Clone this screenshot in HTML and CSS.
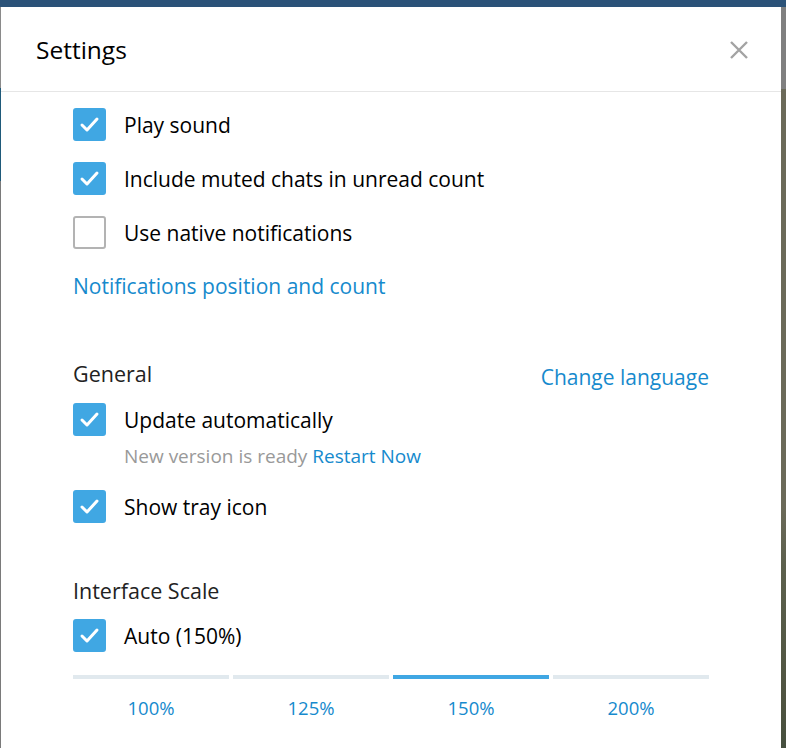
FILE: index.html
```html
<!DOCTYPE html>
<html lang="en">
<head>
	<meta charset="UTF-8">
	<title>Settings</title>
	<link rel="stylesheet" href="styles.css">
</head>
<body>
	<div class="topbar"></div>
	<div class="screen">
		<div class="edge-left"></div>
		<div class="dialog">
			<div class="dialog-head">
				<span class="dialog-title">Settings</span>
				<svg class="close" width="20" height="20" viewBox="0 0 20 20">
					<path d="M2 2 L18 18 M18 2 L2 18" />
				</svg>
			</div>
			<div class="dialog-body">
				<!-- notifications -->
				<label class="check-row">
					<span class="box on"><svg viewBox="0 0 33 33"><path d="M9 17 L14 22 L24 11" /></svg></span>
					<span class="label">Play sound</span>
				</label>
				<label class="check-row">
					<span class="box on"><svg viewBox="0 0 33 33"><path d="M9 17 L14 22 L24 11" /></svg></span>
					<span class="label">Include muted chats in unread count</span>
				</label>
				<label class="check-row">
					<span class="box"></span>
					<span class="label">Use native notifications</span>
				</label>
				<a class="link notif-link">Notifications position and count</a>

				<!-- general -->
				<div class="section-head">
					<span class="section-title">General</span>
					<a class="link lang-link">Change language</a>
				</div>
				<label class="check-row first">
					<span class="box on"><svg viewBox="0 0 33 33"><path d="M9 17 L14 22 L24 11" /></svg></span>
					<span class="label">Update automatically</span>
				</label>
				<div class="update-note">New version is ready <a class="link">Restart Now</a></div>
				<label class="check-row tray">
					<span class="box on"><svg viewBox="0 0 33 33"><path d="M9 17 L14 22 L24 11" /></svg></span>
					<span class="label">Show tray icon</span>
				</label>

				<!-- scale -->
				<div class="section-head scale-head">
					<span class="section-title">Interface Scale</span>
				</div>
				<label class="check-row auto">
					<span class="box on"><svg viewBox="0 0 33 33"><path d="M9 17 L14 22 L24 11" /></svg></span>
					<span class="label">Auto (150%)</span>
				</label>
				<div class="scale">
					<div class="scale-item"><div class="scale-bar"></div><span>100%</span></div>
					<div class="scale-item"><div class="scale-bar"></div><span>125%</span></div>
					<div class="scale-item active"><div class="scale-bar"></div><span>150%</span></div>
					<div class="scale-item"><div class="scale-bar"></div><span>200%</span></div>
				</div>
			</div>
		</div>
		<div class="edge-right"></div>
	</div>
</body>
</html>
```

FILE: styles.css
```css
html, body {
	margin: 0;
	padding: 0;
	height: 748px;
	overflow: hidden;
	font-family: "Open Sans", "DejaVu Sans", sans-serif;
	background: #fff;
}

.topbar { /* dark window strip above the dialog */
	height: 7px;
	background: #2b5278;
}

.screen {
	display: flex;
	height: 741px;
}

.edge-left {
	width: 1px;
	background: linear-gradient(to bottom, #8a8a8a 0, #8a8a8a 81px, #1f5a7a 81px, #1f5a7a 174px, #7a7a7a 174px);
}

.edge-right {
	width: 5px;
	background: linear-gradient(to bottom, #808080 0, #808080 82px, #6b6a59 82px, #6b6a59 500px, #5c604d 560px, #4e5340 700px, #46503f 741px);
}

.dialog {
	flex: 1;
	background: #fff;
}

.dialog-head {
	height: 85px;
	border-bottom: 1px solid #e6e6e6;
	display: flex;
	align-items: center;
	justify-content: space-between;
	padding: 0 32px 0 35px;
	box-sizing: border-box;
}

.dialog-title {
	font-size: 24.5px;
	color: #000;
	margin-top: 1px;
}

.close {
	width: 20px;
	height: 20px;
	margin-top: 1px;
}

.close path {
	stroke: #a3a3a3;
	stroke-width: 2.4;
	fill: none;
}

.dialog-body {
	padding: 16px 0 0 72px;
	width: 636px;
}

.check-row {
	display: flex;
	align-items: center;
	height: 33px;
	margin-bottom: 21px;
}

.box { /* checkbox square */
	width: 33px;
	height: 33px;
	box-sizing: border-box;
	border: 2px solid #b3b3b3;
	border-radius: 3px;
	flex: none;
}

.box.on {
	background: #40a7e3;
	border-color: #40a7e3;
}

.box svg {
	display: block;
	width: 33px;
	height: 33px;
	margin: -2px;
}

.box svg path {
	stroke: #fff;
	stroke-width: 3;
	fill: none;
	stroke-linecap: round;
	stroke-linejoin: round;
}

.label {
	margin-left: 18px;
	font-size: 21px;
	color: #000;
}

.link {
	color: #168acd;
	cursor: pointer;
}

.notif-link {
	display: block;
	font-size: 21px;
	line-height: 32px;
}

.section-head {
	display: flex;
	justify-content: space-between;
	align-items: flex-start;
	margin-top: 58px;
	height: 28px;
	font-size: 21.5px;
	line-height: 28px;
}

.section-title {
	color: #222;
}

.lang-link {
	font-size: 21px;
	margin-top: 3px;
}

.check-row.first {
	margin-top: 15px;
	margin-bottom: 8px;
}

.update-note {
	padding-left: 51px;
	font-size: 19px;
	line-height: 24px;
	color: #999;
}

.check-row.tray {
	margin-top: 22px;
}

.scale-head {
	margin-top: 54px;
}

.check-row.auto {
	margin-top: 14px;
	margin-bottom: 23px;
}

.scale {
	display: flex;
	gap: 4px;
}

.scale-item {
	flex: 1;
	text-align: center;
	font-size: 18.5px;
	line-height: 24px;
	color: #168acd;
}

.scale-bar {
	height: 4px;
	background: #e1e9ee;
	margin-bottom: 17px;
}

.scale-item.active .scale-bar {
	background: #40a7e3;
}
```
